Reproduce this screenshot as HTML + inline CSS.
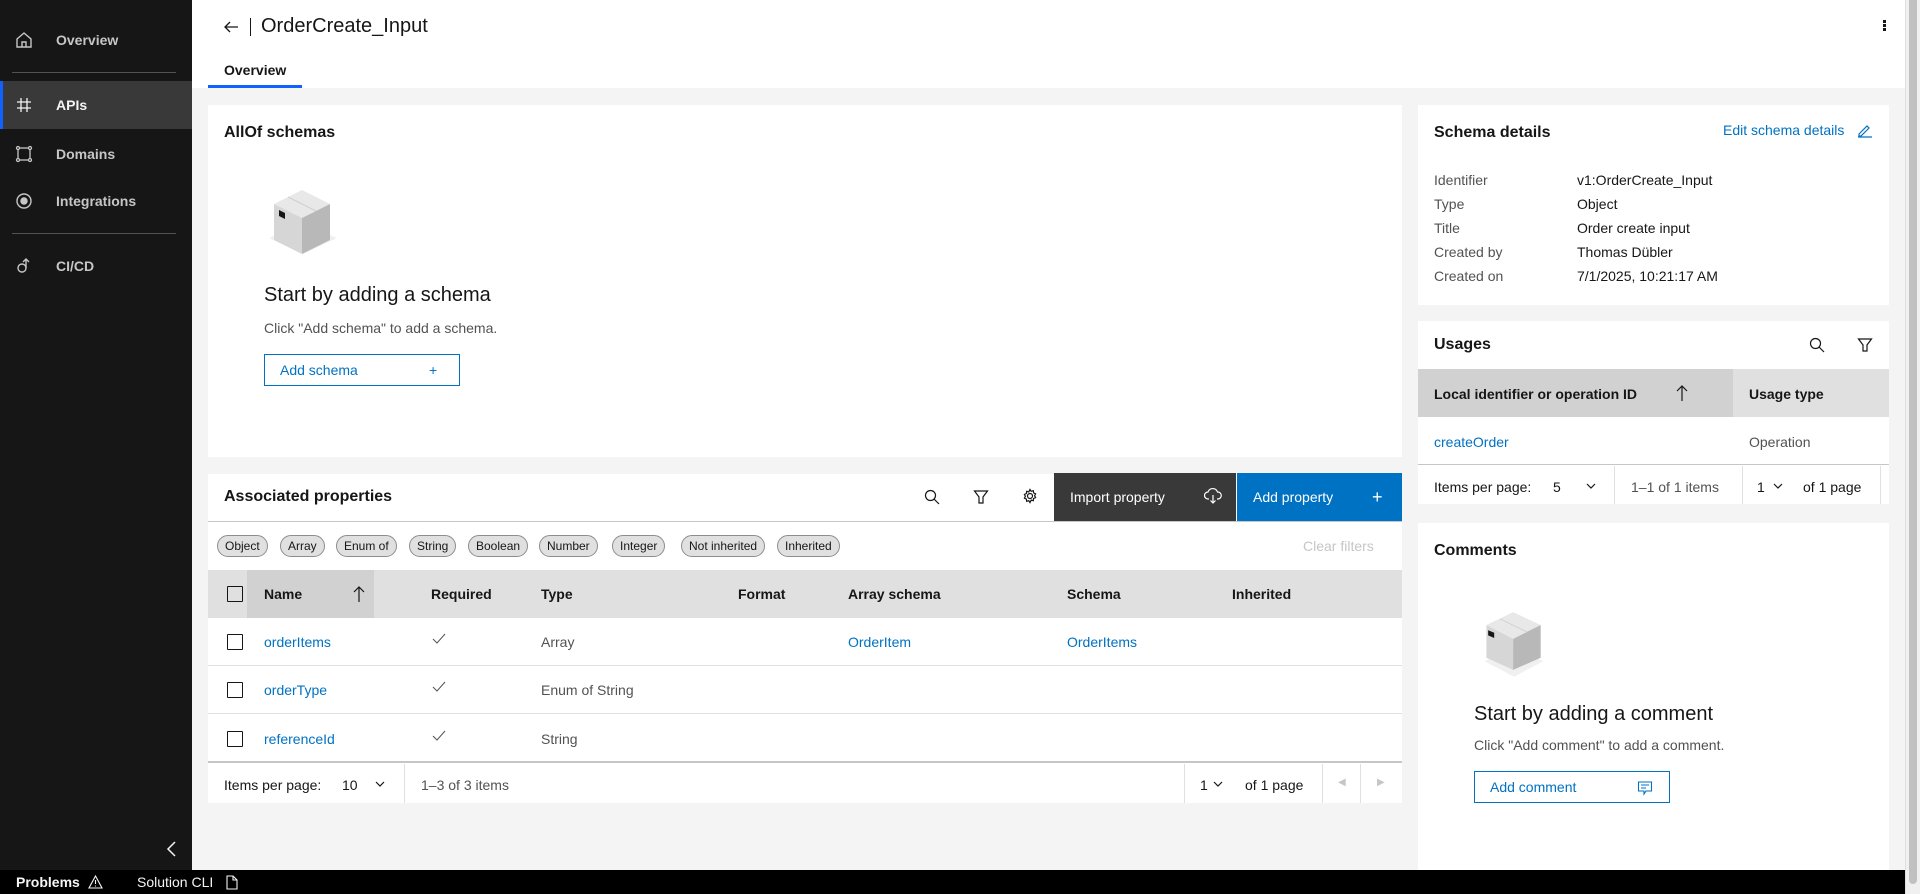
<!DOCTYPE html>
<html><head><meta charset="utf-8"><style>
*{box-sizing:border-box;margin:0;padding:0}
body{width:1920px;height:894px;overflow:hidden;background:#f4f4f4;font-family:"Liberation Sans",sans-serif;font-size:14px;color:#161616;position:relative}
.a{position:absolute}
.side{left:0;top:0;width:192px;height:870px;background:#161616;color:#c6c6c6}
.side .it{position:absolute;left:0;width:192px;height:48px;line-height:48px;padding-left:56px;font-size:14px;font-weight:bold}
.side .ic{position:absolute;left:14px;top:14px;width:20px;height:20px}
.hr{position:absolute;left:12px;width:164px;height:1px;background:#525252}
.card{position:absolute;background:#fff}
.h{font-size:16px;font-weight:bold}
.link{color:#0072c3}
.chip{position:absolute;top:535px;height:22px;line-height:20px;border:1px solid #8d8d8d;border-radius:11px;background:#e0e0e0;font-size:12px;padding:0 7px;color:#161616}
.cb{position:absolute;width:16px;height:16px;border:1px solid #161616;border-radius:1px}
.row{position:absolute;left:208px;width:1194px;height:48px;border-bottom:1px solid #e0e0e0}
.t{position:absolute;white-space:nowrap}
.btn{position:absolute;border:1px solid #0072c3;color:#0072c3;background:#fff;font-size:14px;padding-left:15px;line-height:30px}
.sub{color:#525252}
.vd{position:absolute;width:1px;background:#e0e0e0}
.ck{position:absolute;width:14px;height:12px}
</style></head><body>
<div class="a side">
 <div class="it" style="top:16px">Overview<svg class="ic" viewBox="0 0 20 20" fill="none" stroke="#c6c6c6" stroke-width="1.4"><path d="M3 9 10 3l7 6v8H3z M8 17v-5h4v5"/></svg></div>
 <div class="hr" style="top:72px"></div>
 <div class="it" style="top:81px;height:48px;background:#393939;color:#f4f4f4;border-left:3px solid #0f62fe;padding-left:53px">APIs<svg class="ic" style="left:11px" viewBox="0 0 20 20" stroke="#f4f4f4" stroke-width="1.3"><path d="M7 3v14M13 3v14M3 7h14M3 13h14"/></svg></div>
 <div class="it" style="top:130px">Domains<svg class="ic" viewBox="0 0 20 20" fill="none" stroke="#c6c6c6" stroke-width="1.3"><rect x="4" y="4" width="12" height="12"/><circle cx="4" cy="4" r="1.5" fill="#161616"/><circle cx="16" cy="4" r="1.5" fill="#161616"/><circle cx="4" cy="16" r="1.5" fill="#161616"/><circle cx="16" cy="16" r="1.5" fill="#161616"/></svg></div>
 <div class="it" style="top:177px">Integrations<svg class="ic" viewBox="0 0 20 20" fill="none" stroke="#c6c6c6" stroke-width="1.4"><circle cx="10" cy="10" r="7"/><circle cx="10" cy="10" r="3" fill="#c6c6c6"/></svg></div>
 <div class="hr" style="top:233px"></div>
 <div class="it" style="top:242px">CI/CD<svg class="ic" viewBox="0 0 20 20" fill="none" stroke="#c6c6c6" stroke-width="1.4"><circle cx="8" cy="12" r="4"/><path d="M12 12V3M9 6l3-3 3 3"/></svg></div>
 <svg class="a" style="left:164px;top:839px" width="16" height="20" viewBox="0 0 16 20" fill="none" stroke="#f4f4f4" stroke-width="1.5"><path d="M11 3 4 10l7 7"/></svg>
</div>
<div class="a" style="left:192px;top:0;width:1713px;height:88px;background:#fff"></div>
<svg class="a" style="left:222px;top:18px" width="18" height="18" viewBox="0 0 18 18" fill="none" stroke="#161616" stroke-width="1.3"><path d="M16 9H3M8 4 3 9l5 5"/></svg>
<div class="a" style="left:250px;top:18px;width:1px;height:18px;background:#161616"></div>
<div class="t" style="left:261px;top:15px;font-size:20px">OrderCreate_Input</div>
<div class="a" style="left:1883px;top:20px;width:3px;height:3px;background:#161616;box-shadow:0 4px 0 #161616,0 8px 0 #161616"></div>
<div class="t" style="left:224px;top:62px;font-weight:bold;font-size:14px">Overview</div>
<div class="a" style="left:208px;top:85px;width:94px;height:3px;background:#0f62fe"></div>

<div class="card" style="left:208px;top:105px;width:1194px;height:352px"></div>
<div class="t h" style="left:224px;top:124px">AllOf schemas</div>
<svg class="a" style="left:267px;top:184px" width="72" height="80" viewBox="0 0 72 80"><polygon points="36,70 70,54 36,40 2,54" fill="#f0f0f0"/><polygon points="7,20 35,6 63,20 35,34" fill="#e8e8e8"/><polygon points="7,20 35,34 35,70 7,56" fill="#d6d6d6"/><polygon points="35,34 63,20 63,56 35,70" fill="#b8b8b8"/><polygon points="12,26 18,29 18,35 12,32" fill="#161616"/><path d="M21 13 49 27" stroke="#cfcfcf"/></svg>
<div class="t" style="left:264px;top:284px;font-size:20px">Start by adding a schema</div>
<div class="t sub" style="left:264px;top:320px">Click "Add schema" to add a schema.</div>
<div class="btn" style="left:264px;top:354px;width:196px;height:32px">Add schema<span class="a" style="left:164px;top:0">+</span></div>

<div class="card" style="left:208px;top:474px;width:1194px;height:329px"></div>
<div class="t h" style="left:224px;top:488px">Associated properties</div>
<div class="a" style="left:208px;top:521px;width:1194px;height:1px;background:#c6c6c6"></div>
<svg class="a" style="left:924px;top:489px" width="16" height="16" viewBox="0 0 16 16" fill="none" stroke="#161616" stroke-width="1.2"><circle cx="6.5" cy="6.5" r="5"/><path d="M10 10l5 5"/></svg>
<svg class="a" style="left:973px;top:489px" width="16" height="16" viewBox="0 0 16 16" fill="none" stroke="#161616" stroke-width="1.2"><path d="M1.5 2h13L10 8v6H6V8z"/></svg>
<svg class="a" style="left:1022px;top:488px" width="16" height="16" viewBox="0 0 16 16" fill="none" stroke="#161616" stroke-width="1.2"><circle cx="8" cy="8" r="2.5"/><path d="M8 1.5l1.2 1.8 2.1-.6.3 2.2 2 .9-1 1.9 1 1.9-2 .9-.3 2.2-2.1-.6L8 14.5l-1.2-1.8-2.1.6-.3-2.2-2-.9 1-1.9-1-1.9 2-.9.3-2.2 2.1.6z"/></svg>
<div class="a" style="left:1054px;top:473px;width:182px;height:48px;background:#393939;color:#fff;line-height:48px;padding-left:16px">Import property
<svg class="a" style="left:150px;top:14px" width="18" height="18" viewBox="0 0 18 18" fill="none" stroke="#fff" stroke-width="1.2"><path d="M5 12H4a3.5 3.5 0 0 1 0-7 5 5 0 0 1 9.5 0A3.5 3.5 0 0 1 14 12h-1M9 8v8M6.5 13.5 9 16l2.5-2.5"/></svg></div>
<div class="a" style="left:1237px;top:473px;width:165px;height:48px;background:#0072c3;color:#fff;line-height:48px;padding-left:16px">Add property<span class="a" style="left:135px;top:0;font-size:18px">+</span></div>
<div class="chip" style="left:217px">Object</div><div class="chip" style="left:280px">Array</div><div class="chip" style="left:336px">Enum of</div><div class="chip" style="left:409px">String</div><div class="chip" style="left:468px">Boolean</div><div class="chip" style="left:539px">Number</div><div class="chip" style="left:612px">Integer</div><div class="chip" style="left:681px">Not inherited</div><div class="chip" style="left:777px">Inherited</div>
<div class="t" style="left:1303px;top:538px;color:#c6c6c6">Clear filters</div>
<div class="a" style="left:208px;top:570px;width:1194px;height:48px;background:#e0e0e0"></div>
<div class="a" style="left:247px;top:570px;width:127px;height:48px;background:#d1d1d1"></div>
<div class="cb" style="left:227px;top:586px"></div>
<div class="t" style="left:264px;top:586px;font-weight:bold">Name</div>
<svg class="a" style="left:351px;top:585px" width="16" height="18" viewBox="0 0 16 18" fill="none" stroke="#161616" stroke-width="1.2"><path d="M8 17V2M3 7l5-5 5 5"/></svg>
<div class="t" style="left:431px;top:586px;font-weight:bold">Required</div>
<div class="t" style="left:541px;top:586px;font-weight:bold">Type</div>
<div class="t" style="left:738px;top:586px;font-weight:bold">Format</div>
<div class="t" style="left:848px;top:586px;font-weight:bold">Array schema</div>
<div class="t" style="left:1067px;top:586px;font-weight:bold">Schema</div>
<div class="t" style="left:1232px;top:586px;font-weight:bold">Inherited</div>
<div class="row" style="top:618px"></div><div class="row" style="top:666px"></div><div class="row" style="top:714px;border-bottom:2px solid #c6c6c6;height:49px"></div>
<div class="cb" style="left:227px;top:634px"></div><div class="cb" style="left:227px;top:682px"></div><div class="cb" style="left:227px;top:731px"></div>
<div class="t link" style="left:264px;top:634px">orderItems</div><div class="t link" style="left:264px;top:682px">orderType</div><div class="t link" style="left:264px;top:731px">referenceId</div>
<svg class="ck" style="left:432px;top:633px" viewBox="0 0 14 12" fill="none" stroke="#525252" stroke-width="1"><path d="M1 6l4 4 8-9"/></svg>
<svg class="ck" style="left:432px;top:681px" viewBox="0 0 14 12" fill="none" stroke="#525252" stroke-width="1"><path d="M1 6l4 4 8-9"/></svg>
<svg class="ck" style="left:432px;top:730px" viewBox="0 0 14 12" fill="none" stroke="#525252" stroke-width="1"><path d="M1 6l4 4 8-9"/></svg>
<div class="t sub" style="left:541px;top:634px">Array</div><div class="t sub" style="left:541px;top:682px">Enum of String</div><div class="t sub" style="left:541px;top:731px">String</div>
<div class="t link" style="left:848px;top:634px">OrderItem</div><div class="t link" style="left:1067px;top:634px">OrderItems</div>
<div class="t" style="left:224px;top:777px">Items per page:</div><div class="t" style="left:342px;top:777px">10</div>
<svg class="a" style="left:374px;top:778px" width="12" height="12" viewBox="0 0 12 12" fill="none" stroke="#161616" stroke-width="1.2"><path d="M2 4l4 4 4-4"/></svg>
<div class="vd" style="left:404px;top:764px;height:39px"></div>
<div class="t sub" style="left:421px;top:777px">1–3 of 3 items</div>
<div class="vd" style="left:1184px;top:764px;height:39px"></div>
<div class="t" style="left:1200px;top:777px">1</div>
<svg class="a" style="left:1212px;top:778px" width="12" height="12" viewBox="0 0 12 12" fill="none" stroke="#161616" stroke-width="1.2"><path d="M2 4l4 4 4-4"/></svg>
<div class="t" style="left:1245px;top:777px">of 1 page</div>
<div class="vd" style="left:1322px;top:764px;height:39px"></div><div class="vd" style="left:1360px;top:764px;height:39px"></div>
<div class="t" style="left:1338px;top:777px;color:#c6c6c6;font-size:10px">◀</div><div class="t" style="left:1377px;top:777px;color:#c6c6c6;font-size:10px">▶</div>

<div class="card" style="left:1418px;top:105px;width:471px;height:200px"></div>
<div class="t h" style="left:1434px;top:124px">Schema details</div>
<div class="t link" style="left:1723px;top:122px">Edit schema details</div>
<svg class="a" style="left:1857px;top:122px" width="16" height="16" viewBox="0 0 16 16" fill="none" stroke="#0072c3" stroke-width="1.2"><path d="M2 12l8-8 2 2-8 8H2zM1 15h14"/></svg>
<div class="t sub" style="left:1434px;top:172px">Identifier</div><div class="t" style="left:1577px;top:172px">v1:OrderCreate_Input</div>
<div class="t sub" style="left:1434px;top:196px">Type</div><div class="t" style="left:1577px;top:196px">Object</div>
<div class="t sub" style="left:1434px;top:220px">Title</div><div class="t" style="left:1577px;top:220px">Order create input</div>
<div class="t sub" style="left:1434px;top:244px">Created by</div><div class="t" style="left:1577px;top:244px">Thomas Dübler</div>
<div class="t sub" style="left:1434px;top:268px">Created on</div><div class="t" style="left:1577px;top:268px">7/1/2025, 10:21:17 AM</div>

<div class="card" style="left:1418px;top:321px;width:471px;height:183px"></div>
<div class="t h" style="left:1434px;top:336px">Usages</div>
<svg class="a" style="left:1809px;top:337px" width="16" height="16" viewBox="0 0 16 16" fill="none" stroke="#161616" stroke-width="1.2"><circle cx="6.5" cy="6.5" r="5"/><path d="M10 10l5 5"/></svg>
<svg class="a" style="left:1857px;top:337px" width="16" height="16" viewBox="0 0 16 16" fill="none" stroke="#161616" stroke-width="1.2"><path d="M1.5 2h13L10 8v6H6V8z"/></svg>
<div class="a" style="left:1418px;top:369px;width:471px;height:48px;background:#e0e0e0"></div>
<div class="a" style="left:1418px;top:369px;width:315px;height:48px;background:#d1d1d1"></div>
<div class="t" style="left:1434px;top:386px;font-weight:bold">Local identifier or operation ID</div>
<svg class="a" style="left:1674px;top:384px" width="16" height="18" viewBox="0 0 16 18" fill="none" stroke="#161616" stroke-width="1.2"><path d="M8 17V2M3 7l5-5 5 5"/></svg>
<div class="t" style="left:1749px;top:386px;font-weight:bold">Usage type</div>
<div class="a" style="left:1418px;top:464px;width:471px;height:1px;background:#c6c6c6"></div>
<div class="t link" style="left:1434px;top:434px">createOrder</div><div class="t sub" style="left:1749px;top:434px">Operation</div>
<div class="t" style="left:1434px;top:479px">Items per page:</div><div class="t" style="left:1553px;top:479px">5</div>
<svg class="a" style="left:1585px;top:480px" width="12" height="12" viewBox="0 0 12 12" fill="none" stroke="#161616" stroke-width="1.2"><path d="M2 4l4 4 4-4"/></svg>
<div class="vd" style="left:1614px;top:466px;height:38px"></div>
<div class="t sub" style="left:1631px;top:479px">1–1 of 1 items</div>
<div class="vd" style="left:1742px;top:466px;height:38px"></div>
<div class="t" style="left:1757px;top:479px">1</div>
<svg class="a" style="left:1772px;top:480px" width="12" height="12" viewBox="0 0 12 12" fill="none" stroke="#161616" stroke-width="1.2"><path d="M2 4l4 4 4-4"/></svg>
<div class="t" style="left:1803px;top:479px">of 1 page</div>
<div class="vd" style="left:1880px;top:466px;height:38px"></div>

<div class="card" style="left:1418px;top:523px;width:471px;height:347px"></div>
<div class="t h" style="left:1434px;top:542px">Comments</div>
<svg class="a" style="left:1483px;top:605px" width="62" height="78" viewBox="0 0 72 80"><polygon points="36,78 70,60 36,44 2,60" fill="#f0f0f0"/><polygon points="4,18 35,3 67,18 35,34" fill="#e8e8e8"/><polygon points="4,18 35,34 35,70 4,56" fill="#d6d6d6"/><polygon points="35,34 67,18 67,56 35,70" fill="#b8b8b8"/><polygon points="6,24 13,27 13,33 6,30" fill="#161616"/><path d="M20 11 51 26" stroke="#cfcfcf"/></svg>
<div class="t" style="left:1474px;top:703px;font-size:20px">Start by adding a comment</div>
<div class="t sub" style="left:1474px;top:737px">Click "Add comment" to add a comment.</div>
<div class="btn" style="left:1474px;top:771px;width:196px;height:32px">Add comment
<svg class="a" style="left:162px;top:8px" width="16" height="16" viewBox="0 0 16 16" fill="none" stroke="#0072c3" stroke-width="1.1"><path d="M1.5 2h13v9H9l-2 3v-3H1.5zM4 5h8M4 8h5"/></svg></div>

<div class="a" style="left:0;top:870px;width:1905px;height:24px;background:#000;color:#f4f4f4">
 <span class="t" style="left:16px;top:4px;font-weight:bold">Problems</span>
 <svg class="a" style="left:88px;top:5px" width="15" height="14" viewBox="0 0 15 14" fill="none" stroke="#f4f4f4" stroke-width="1.1"><path d="M7.5 1 14 13H1zM7.5 5v4M7.5 10.5v1"/></svg>
 <span class="t" style="left:137px;top:4px">Solution CLI</span>
 <svg class="a" style="left:226px;top:5px" width="12" height="15" viewBox="0 0 12 15" fill="none" stroke="#f4f4f4" stroke-width="1.1"><path d="M1 1h6l4 4v9H1zM7 1v4h4"/></svg>
</div>
<div class="a" style="left:1905px;top:0;width:15px;height:894px;background:#f0f0f0;border-left:1px solid #e0e0e0"></div>
<div class="a" style="left:1909px;top:0;width:8px;height:884px;background:#c1c1c1;border-radius:0 0 4px 4px"></div>
</body></html>
